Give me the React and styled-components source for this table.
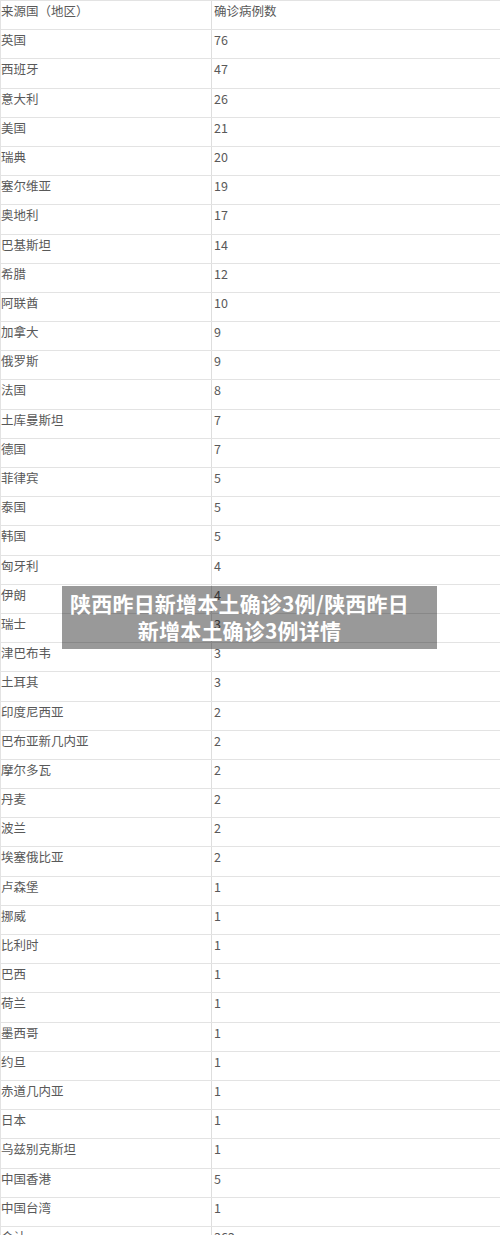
import React from "react";
import styled, { createGlobalStyle } from "styled-components";

const GlobalStyle = createGlobalStyle`
	html, body {
		margin: 0;
		padding: 0;
		background: #fff;
	}
	body {
		font-family: "Noto Sans CJK SC", "Noto Sans", sans-serif;
	}
`;

const Page = styled.div`
	position: relative;
	width: 500px;
	height: 1235px;
	overflow: hidden;
`;

const Table = styled.div`
	display: flex;
	flex-direction: column;
	border-top: 1px solid #e3e3e3;
	border-left: 1px solid #e3e3e3;
`;

const Row = styled.div`
	display: grid;
	grid-template-columns: 210px 1fr;
	height: 29.2px;
	box-sizing: border-box;
	border-bottom: 1px solid #e3e3e3;
	flex-shrink: 0;
`;

const Cell = styled.div`
	padding: 1px 0 0 ${(p) => (p.$num ? "2px" : "0")};
	border-left: ${(p) => (p.$num ? "1px solid #dedede" : "none")};
	font-size: 12.5px;
	line-height: 18px;
	color: #595959;
	white-space: nowrap;
`;

const Banner = styled.div`
	position: absolute;
	left: 62px;
	top: 586px;
	width: 375px;
	height: 63px;
	box-sizing: border-box;
	padding: 4px 22px 4px 2px;
	background: rgba(0, 0, 0, 0.4);
	color: #fff;
	font-family: "Noto Sans CJK SC", sans-serif;
	font-weight: 700;
	font-size: 21px;
	line-height: 27px;
	letter-spacing: 0.2px;
	text-align: center;
`;

const rows = [
	["英国", "76"],
	["西班牙", "47"],
	["意大利", "26"],
	["美国", "21"],
	["瑞典", "20"],
	["塞尔维亚", "19"],
	["奥地利", "17"],
	["巴基斯坦", "14"],
	["希腊", "12"],
	["阿联酋", "10"],
	["加拿大", "9"],
	["俄罗斯", "9"],
	["法国", "8"],
	["土库曼斯坦", "7"],
	["德国", "7"],
	["菲律宾", "5"],
	["泰国", "5"],
	["韩国", "5"],
	["匈牙利", "4"],
	["伊朗", "4"],
	["瑞士", "3"],
	["津巴布韦", "3"],
	["土耳其", "3"],
	["印度尼西亚", "2"],
	["巴布亚新几内亚", "2"],
	["摩尔多瓦", "2"],
	["丹麦", "2"],
	["波兰", "2"],
	["埃塞俄比亚", "2"],
	["卢森堡", "1"],
	["挪威", "1"],
	["比利时", "1"],
	["巴西", "1"],
	["荷兰", "1"],
	["墨西哥", "1"],
	["约旦", "1"],
	["赤道几内亚", "1"],
	["日本", "1"],
	["乌兹别克斯坦", "1"],
	["中国香港", "5"],
	["中国台湾", "1"],
	["合计", "362"],
];

export default function App() {
	return (
		<Page>
			<GlobalStyle />
			<Table>
				<Row>
					<Cell>来源国（地区）</Cell>
					<Cell $num>确诊病例数</Cell>
				</Row>
				{rows.map(([name, count]) => (
					<Row key={name}>
						<Cell>{name}</Cell>
						<Cell $num>{count}</Cell>
					</Row>
				))}
			</Table>
			<Banner>陕西昨日新增本土确诊3例/陕西昨日新增本土确诊3例详情</Banner>
		</Page>
	);
}
